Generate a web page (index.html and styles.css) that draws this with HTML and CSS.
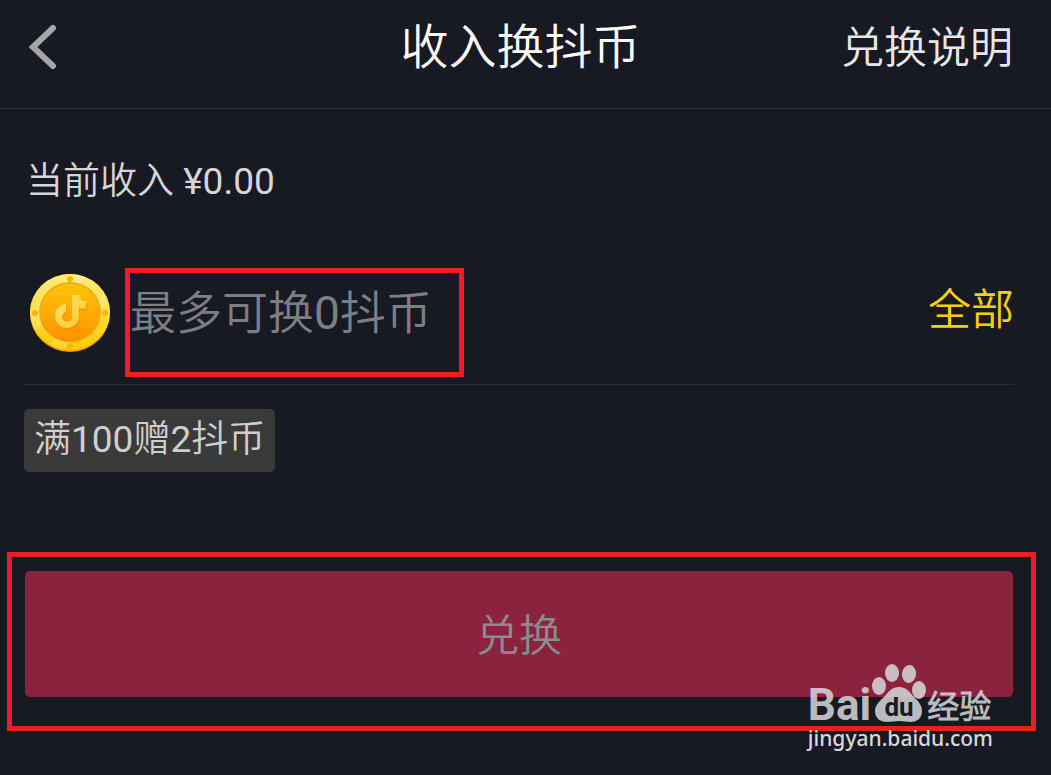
FILE: index.html
```html
<!DOCTYPE html>
<html lang="zh-CN">
<head>
    <meta charset="UTF-8">
    <meta name="viewport" content="width=device-width, initial-scale=1.0">
    <title>收入换抖币</title>
    <link rel="stylesheet" href="styles.css">
</head>
<body>
    <header class="header">
        <button class="back-btn" type="button" aria-label="返回">
            <svg width="30" height="46" viewBox="0 0 30 46" fill="none" stroke="#a6a6aa" stroke-width="6" stroke-linecap="round">
                <path d="M25 4 L5 23 L25 42"/>
            </svg>
        </button>
        <h1 class="title">收入换抖币</h1>
        <a class="help-link" href="#">兑换说明</a>
    </header>

    <main class="content">
        <p class="income">当前收入 ¥0.00</p>

        <div class="amount-row">
            <svg class="coin" viewBox="0 0 82 80" aria-hidden="true">
                <defs>
                    <linearGradient id="rim" x1="0" y1="0" x2="0" y2="1">
                        <stop offset="0" stop-color="#ffec78"/>
                        <stop offset="0.45" stop-color="#ffe04c"/>
                        <stop offset="1" stop-color="#ffcb00"/>
                    </linearGradient>
                    <linearGradient id="face" x1="0" y1="0" x2="0" y2="1">
                        <stop offset="0" stop-color="#ffc40a"/>
                        <stop offset="1" stop-color="#ff9200"/>
                    </linearGradient>
                    <linearGradient id="note" x1="0" y1="0" x2="1" y2="1">
                        <stop offset="0" stop-color="#ffe36a"/>
                        <stop offset="1" stop-color="#ffc92e"/>
                    </linearGradient>
                    <clipPath id="coinClip"><ellipse cx="41" cy="39" rx="40" ry="38"/></clipPath>
                </defs>
                <ellipse cx="41" cy="40" rx="40" ry="39" fill="#f5a800"/>
                <ellipse cx="41" cy="39" rx="40" ry="38" fill="url(#rim)"/>
                <g clip-path="url(#coinClip)" fill="#fff" opacity="0.16">
                    <path d="M-4 44 L45 -5 H66 L4 60z"/>
                    <path d="M16 76 L80 14 L86 22 L27 84z"/>
                </g>
                <ellipse cx="41" cy="39" rx="31" ry="30" fill="#f3ad0b"/>
                <ellipse cx="41" cy="40" rx="30" ry="29" fill="url(#face)"/>
                <g fill="#f6b60c">
                    <circle cx="41" cy="6" r="3"/>
                    <circle cx="41" cy="73" r="3"/>
                    <circle cx="6" cy="40" r="3"/>
                    <circle cx="76" cy="40" r="3"/>
                </g>
                <path d="M43 22h7c1 5 3 7 8 6l-2 8c-3 0-4-1-6-2v9a12 12 0 1 1-13-12v8a5 5 0 1 0 6 4z" fill="#e98b00" opacity="0.5" transform="translate(1 2)"/>
                <path d="M43 22h7c1 5 3 7 8 6l-2 8c-3 0-4-1-6-2v9a12 12 0 1 1-13-12v8a5 5 0 1 0 6 4z" fill="url(#note)"/>
            </svg>
            <input class="amount-input" type="text" inputmode="numeric" placeholder="最多可换0抖币" aria-label="兑换数量">
            <button class="all-btn" type="button">全部</button>
        </div>

        <p class="bonus">满100赠2抖币</p>
    </main>

    <div class="submit-box">
        <button class="submit-btn" type="button">兑换</button>
    </div>

    <div class="watermark">
        <div class="brand">
            <span class="brand-bai">Bai</span>
            <svg class="paw" viewBox="0 0 56 60" aria-hidden="true">
                <ellipse cx="8" cy="23" rx="7" ry="9"/>
                <ellipse cx="21" cy="10" rx="7" ry="9"/>
                <ellipse cx="38" cy="11" rx="7" ry="9" transform="rotate(8 38 11)"/>
                <ellipse cx="48" cy="27" rx="7" ry="9"/>
                <path d="M28 24c8 0 11 6 15 10 4 4 8 8 8 14 0 7-5 11-11 11-5 0-8-1-12-1s-7 1-12 1c-7 0-12-4-12-11 0-6 5-10 9-14 4-4 7-10 15-10z"/>
                <text class="paw-text" x="28" y="53" text-anchor="middle">du</text>
            </svg>
            <span class="brand-name">经验</span>
        </div>
        <span class="site">jingyan.baidu.com</span>
    </div>
</body>
</html>
```
FILE: styles.css
```css
* {
    margin: 0;
    padding: 0;
    box-sizing: border-box;
}

body {
    position: relative;
    min-height: 100vh;
    background: #171923;
    color: #d6d6d8;
    font-family: Roboto, "Noto Sans CJK SC DemiLight", "Noto Sans CJK SC", sans-serif;
    font-weight: 400;
}

button,
input {
    border: none;
    background: none;
    font: inherit;
}

button {
    cursor: pointer;
}

.header {
    display: grid;
    grid-template-columns: 1fr auto 1fr;
    align-items: start;
    height: 109px;
    padding: 0 38px 0 28px;
    border-bottom: 1px solid #2b2d37;
}

.back-btn {
    justify-self: start;
    height: 94px;
    line-height: 0;
}

.title {
    color: #fff;
    font-size: 48px;
    font-weight: inherit;
    line-height: 96px;
}

.help-link {
    justify-self: end;
    color: #e8e8e9;
    font-size: 43px;
    line-height: 96px;
    text-decoration: none;
}

.content {
    padding: 44px 37px 0 24px;
}

.income {
    padding-left: 2px;
    font-size: 37px;
    line-height: 58px;
}

.amount-row {
    display: flex;
    align-items: flex-start;
    margin-top: 57px;
    padding-bottom: 7px;
    border-bottom: 1px solid #2b2d37;
}

.coin {
    flex: none;
    width: 82px;
    height: 80px;
    margin: 5px 14px 0 5px;
}

.amount-input {
    flex: 0 1 339px;
    min-width: 0;
    height: 109px;
    padding-bottom: 20px;
    border: 5px solid #ee1c25;
    color: #fff;
    font-size: 46px;
    outline: none;
}

.amount-input::placeholder {
    color: #7e7f85;
    opacity: 1;
}

.all-btn {
    margin-left: auto;
    color: #face15;
    font-size: 43px;
    line-height: 84px;
}

.bonus {
    width: fit-content;
    margin-top: 24px;
    padding: 0 10px 1px;
    border-radius: 5px;
    background: #3a3a3a;
    color: #cfcfcf;
    font-size: 37px;
    line-height: 62px;
}

.submit-box {
    margin: 80px 15px 0 7px;
    padding: 14px 18px 29px 13px;
    border: 5px solid #ee1c25;
}

.submit-btn {
    display: block;
    width: 100%;
    height: 126px;
    padding-bottom: 4px;
    border-radius: 5px;
    background: #8a233d;
    color: #8b8c91;
    font-size: 43px;
}

/* sits over the corner of the submit box */
.watermark {
    position: absolute;
    right: 58px;
    bottom: 22px;
    color: #d8d8da;
}

.brand {
    display: flex;
    align-items: flex-end;
    height: 60px;
    opacity: 0.85;
}

.brand-bai {
    font-size: 44px;
    font-weight: 700;
    line-height: 36px;
}

.paw {
    width: 56px;
    height: 60px;
    fill: currentColor;
}

.paw-text {
    fill: #171923;
    font-size: 26px;
    font-weight: 700;
}

.brand-name {
    font-size: 32px;
    font-weight: 700;
    line-height: 32px;
}

.site {
    display: block;
    font-family: "Noto Sans", sans-serif;
    font-size: 21px;
    font-weight: 500;
    line-height: 30px;
}
```
